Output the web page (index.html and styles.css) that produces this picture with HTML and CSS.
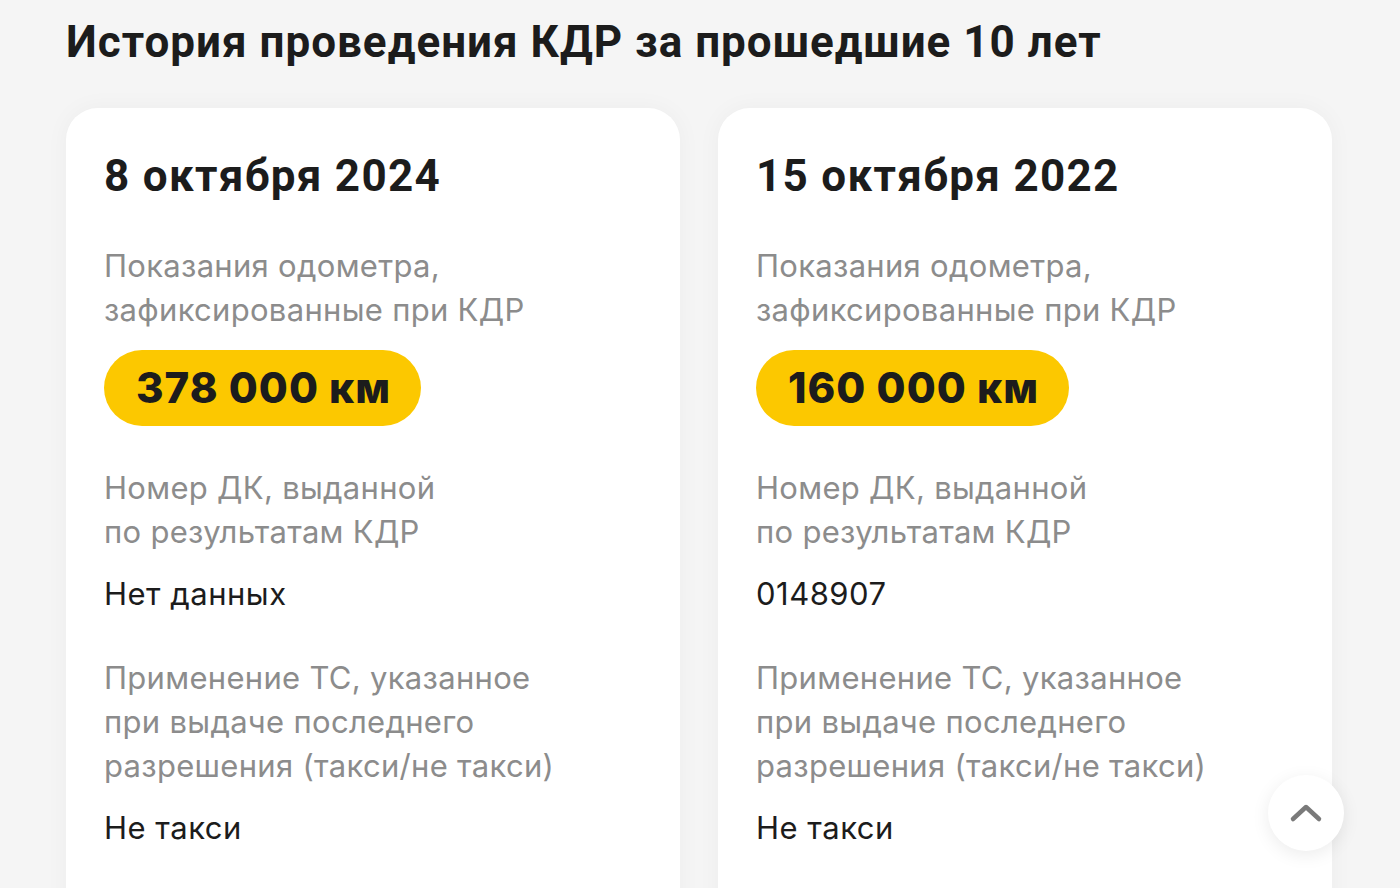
FILE: index.html
```html
<!DOCTYPE html>
<html lang="ru">
  <head>
    <meta charset="UTF-8" />
    <meta name="viewport" content="width=device-width, initial-scale=1.0" />
    <title>История проведения КДР</title>
    <link rel="stylesheet" href="styles.css">
  </head>
  <body>
    <main class="history">
      <h1 class="history-title">История проведения КДР за прошедшие 10 лет</h1>

      <div class="cards">
        <section class="card">
          <h2 class="card-date">8 октября 2024</h2>
          <div class="field">
            <p class="label">Показания одометра,<br />зафиксированные при КДР</p>
            <span class="mileage">378 000 км</span>
          </div>
          <div class="field">
            <p class="label">Номер ДК, выданной<br />по результатам КДР</p>
            <p class="value">Нет данных</p>
          </div>
          <div class="field">
            <p class="label">Применение ТС, указанное<br />при выдаче последнего<br />разрешения (такси/не такси)</p>
            <p class="value">Не такси</p>
          </div>
        </section>

        <section class="card">
          <h2 class="card-date">15 октября 2022</h2>
          <div class="field">
            <p class="label">Показания одометра,<br />зафиксированные при КДР</p>
            <span class="mileage">160 000 км</span>
          </div>
          <div class="field">
            <p class="label">Номер ДК, выданной<br />по результатам КДР</p>
            <p class="value">0148907</p>
          </div>
          <div class="field">
            <p class="label">Применение ТС, указанное<br />при выдаче последнего<br />разрешения (такси/не такси)</p>
            <p class="value">Не такси</p>
          </div>
        </section>
      </div>
    </main>

    <button class="to-top" aria-label="Наверх">
      <svg width="40" height="40" viewBox="0 0 40 40">
        <path d="M7 26 L20 14 L33 26" fill="none" stroke="#7a7a7a" stroke-width="4.5" stroke-linecap="round" stroke-linejoin="round" />
      </svg>
    </button>
  </body>
</html>
```

FILE: styles.css
```css
body {
  margin: 0;
  background-color: #f5f5f5;
  color: #1c1c1c;
  font-family: Inter, "Noto Sans", sans-serif;
  height: 888px;
  overflow: hidden;
}

.history {
  padding: 14px 0 0 66px;
}

.history-title {
  margin: 0;
  font-family: Roboto, "Liberation Sans", sans-serif;
  font-size: 44px;
  line-height: 56px;
  font-weight: 700;
  letter-spacing: 1px;
  color: #1c1c1c;
}

.cards {
  display: flex;
  gap: 38px;
  margin-top: 38px;
}

.card {
  width: 614px;
  box-sizing: border-box;
  min-height: 900px;
  padding: 42px 38px 0 38px;
  background-color: #ffffff;
  border-radius: 32px;
  box-shadow: 0 0 24px rgba(0, 0, 0, 0.04);
}

.card-date {
  margin: 0;
  font-family: Roboto, "Liberation Sans", sans-serif;
  font-size: 44px;
  line-height: 52px;
  font-weight: 700;
  letter-spacing: 1.3px;
  color: #1c1c1c;
}

.field {
  margin-top: 40px;
}

.field:first-of-type {
  margin-top: 42px;
}

.label {
  margin: 0;
  font-size: 31px;
  line-height: 44px;
  color: #8c8c8c;
  letter-spacing: 0.3px;
}

.mileage {
  display: inline-block;
  margin-top: 18px;
  padding: 0 30px 0 32px;
  height: 76px;
  line-height: 76px;
  border-radius: 38px;
  background-color: #fcc800;
  font-size: 42px;
  font-weight: 800;
  color: #1c1c1c;
  letter-spacing: 1px;
}

.value {
  margin: 18px 0 0;
  font-size: 31px;
  line-height: 44px;
  color: #1c1c1c;
  letter-spacing: 0.5px;
}

.to-top {
  position: fixed;
  left: 1268px;
  top: 775px;
  width: 76px;
  height: 76px;
  border: none;
  border-radius: 50%;
  background-color: #ffffff;
  box-shadow: 0 4px 18px rgba(0, 0, 0, 0.08);
  display: flex;
  align-items: center;
  justify-content: center;
  padding: 0;
}
```
